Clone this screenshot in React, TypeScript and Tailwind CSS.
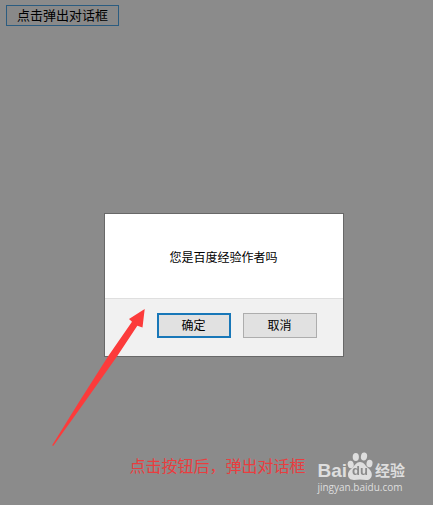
import React from 'react';

interface DialogButtonProps {
  label: string;
  primary?: boolean;
}

function DialogButton({ label, primary }: DialogButtonProps) {
  return (
    <button
      type="button"
      autoFocus={primary}
      className={`h-[25px] w-[74px] bg-[#e1e1e1] pt-0.5 text-xs leading-none text-black outline-none ${
        primary ? 'border-2 border-[#1877b8]' : 'border border-[#adadad]'
      }`}
    >
      {label}
    </button>
  );
}

function ConfirmDialog() {
  return (
    <div
      role="dialog"
      aria-labelledby="confirm-message"
      className="w-60 border border-[#686868] bg-white text-black"
    >
      <p id="confirm-message" className="pt-9 pb-8 text-center text-xs">
        您是百度经验作者吗
      </p>
      <div className="flex justify-end gap-3 border-t border-[#dfdfdf] bg-[#f1f1f1] pt-3.5 pr-[26px] pb-[18px]">
        <DialogButton label="确定" primary />
        <DialogButton label="取消" />
      </div>
    </div>
  );
}

function Arrow() {
  return (
    <svg viewBox="0 0 96 140" className="h-[140px] w-24" fill="#fc3b3b" aria-hidden="true">
      <path d="M93.7 2 L91.5 20.5 L86.3 18.7 L66.300 49 L33 96 L2.200 139 L1.200 138.300 L28 95 L57.300 49 L81 14.700 L78 12 Z" />
    </svg>
  );
}

function Watermark() {
  return (
    <div className="text-[#dedede]">
      <div className="flex items-end">
        <span className="text-[19px] leading-5 font-bold">Bai</span>
        <span className="relative">
          <svg viewBox="0 0 26 30" className="h-[30px] w-[26px]" fill="currentColor" aria-hidden="true">
            <ellipse cx="3.7" cy="13.5" rx="3" ry="3.8" transform="rotate(-12 3.7 13.5)" />
            <ellipse cx="8.8" cy="6" rx="3.1" ry="4" />
            <ellipse cx="17" cy="5.500" rx="3.1" ry="4" transform="rotate(10 17 5.500)" />
            <ellipse cx="22.5" cy="12.5" rx="3" ry="3.8" transform="rotate(8 22.500 12.500)" />
            <path d="M13 11c3.500 0 5 3 7 5s5 4 4.800 8c-.2 3-2.300 5.200-5.800 5-2-.1-4-.6-6-.6s-4 .6-6 .6c-3.800 0-6-2-6-5.200 0-3.500 2.500-5.300 4.700-7.300 2-2 3.800-5.500 7.300-5.500z" />
          </svg>
          <span className="absolute inset-x-0 bottom-1 text-center text-[13px] leading-3 font-bold text-[#8b8b8b]">
            du
          </span>
        </span>
        <span className="pl-0.5 text-[15px] leading-5 font-bold">经验</span>
      </div>
      <div className="font-['Open_Sans'] text-[10px] leading-3">jingyan.baidu.com</div>
    </div>
  );
}

export default function App() {
  return (
    <main className="flex min-h-screen flex-col bg-[#8b8b8b] font-['Liberation_Sans','Noto_Sans_CJK_SC',sans-serif]">
      <div className="flex px-1.5 pt-[5px]">
        <button
          type="button"
          className="h-[21px] border border-[#2b5c80] bg-[#898989] px-2.5 text-[13px] leading-none text-black"
        >
          点击弹出对话框
        </button>
      </div>

      {/* modal layer */}
      <div className="fixed inset-0 flex items-center justify-center pt-16 pl-3.5">
        <div className="relative">
          <ConfirmDialog />
          <div className="absolute -bottom-[90px] -left-[53px]">
            <Arrow />
          </div>
        </div>
      </div>

      <footer className="mt-auto flex items-end justify-end gap-3 pr-7 pb-3">
        <p className="pb-3.5 text-base text-[#e93d3f]">点击按钮后，弹出对话框</p>
        <Watermark />
      </footer>
    </main>
  );
}
